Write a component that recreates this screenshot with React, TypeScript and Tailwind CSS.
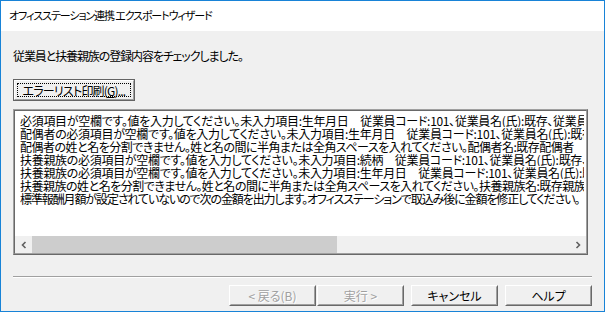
const lines: { text: string; track: string }[] = [
  { text: "必須項目が空欄です。値を入力してください。未入力項目:生年月日　従業員コード:101、従業員名(氏):既存、従業員名(名):既存", track: "tracking-[-0.3px]" },
  { text: "配偶者の必須項目が空欄です。値を入力してください。未入力項目:生年月日　従業員コード:101、従業員名(氏):既存、従業員名(名):既存", track: "tracking-[-0.3px]" },
  { text: "配偶者の姓と名を分割できません。姓と名の間に半角または全角スペースを入れてください。配偶者名:既存配偶者　従業員コード:101", track: "tracking-[-0.5px]" },
  { text: "扶養親族の必須項目が空欄です。値を入力してください。未入力項目:続柄　従業員コード:101、従業員名(氏):既存、従業員名(名):既存", track: "tracking-[-0.3px]" },
  { text: "扶養親族の必須項目が空欄です。値を入力してください。未入力項目:生年月日　従業員コード:101、従業員名(氏):既存、従業員名(名):既存", track: "tracking-[-0.3px]" },
  { text: "扶養親族の姓と名を分割できません。姓と名の間に半角または全角スペースを入れてください。扶養親族名:既存親族　従業員コード:101", track: "tracking-[-0.5px]" },
  { text: "標準報酬月額が設定されていないので次の金額を出力します。オフィスステーションで取込み後に金額を修正してください。", track: "tracking-[-1.1px]" },
];

function WinButton({ label, disabled }: { label: string; disabled?: boolean }) {
  return (
    <div className="w-[87px] h-[21px] border border-t-white border-l-white border-b-[#696969] border-r-[#696969] bg-[#f0f0f0]">
      <div className="w-full h-full border border-t-[#f0f0f0] border-l-[#f0f0f0] border-b-[#a0a0a0] border-r-[#a0a0a0] flex items-center justify-center">
        <span
          className={
            disabled
              ? "whitespace-nowrap text-[#a0a0a0] [text-shadow:1px_1px_0_#ffffff]"
              : "whitespace-nowrap text-black"
          }
        >
          {label}
        </span>
      </div>
    </div>
  );
}

export default function App() {
  return (
    <div
      className="w-[605px] h-[312px] border border-[#1883d7] bg-[#f0f0f0] flex flex-col text-[12px] leading-[13px] text-black overflow-hidden [font-feature-settings:'palt']"
      style={{ fontFamily: '"Noto Sans CJK JP", "Noto Sans", sans-serif' }}
    >
      {/* title bar */}
      <div className="h-[30px] bg-white flex items-center pl-[8px] pb-[2px] shrink-0">
        <span className="whitespace-nowrap text-[11px] tracking-[-1.1px]">オフィスステーション連携 エクスポートウィザード</span>
      </div>

      <div className="flex flex-col px-[12px]">
        <div className="mt-[18px] whitespace-nowrap tracking-[-1.1px]">従業員と扶養親族の登録内容をチェックしました。</div>

        <div className="mt-[17px] w-[122px] h-[22px] border border-[#646464] bg-[#f0f0f0]">
          <div className="w-full h-full border border-t-white border-l-white border-b-[#a0a0a0] border-r-[#a0a0a0] p-[2px]">
            <div className="w-full h-full border border-dotted border-black flex items-center justify-center">
              <span className="whitespace-nowrap tracking-[-0.8px]">
                エラーリスト印刷(<span className="underline">G</span>)...
              </span>
            </div>
          </div>
        </div>

        {/* error list */}
        <div className="mt-[8px] w-[575px] h-[146px] border border-t-[#a0a0a0] border-l-[#a0a0a0] border-b-[#696969] border-r-[#696969]">
          <div className="w-full h-full border border-t-[#696969] border-l-[#696969] border-b-[#a0a0a0] border-r-[#a0a0a0] bg-white flex flex-col">
            <div className="flex-1 overflow-hidden pl-[5px] pt-[3px] pr-[2px]">
              {lines.map((l, i) => (
                <div key={i} className={`whitespace-pre overflow-hidden ${l.track}`}>
                  {l.text}
                </div>
              ))}
            </div>
            <div className="h-[17px] bg-[#f0f0f0] flex items-center shrink-0">
              <div className="w-[17px] h-full flex items-center justify-center">
                <svg width="8" height="8" viewBox="0 0 8 8">
                  <path d="M5.5 1 L2.5 4 L5.5 7" fill="none" stroke="#606060" strokeWidth="1.6" />
                </svg>
              </div>
              <div className="w-[305px] h-full bg-[#cdcdcd]" />
              <div className="flex-1" />
              <div className="w-[17px] h-full flex items-center justify-center">
                <svg width="8" height="8" viewBox="0 0 8 8">
                  <path d="M2.5 1 L5.5 4 L2.5 7" fill="none" stroke="#606060" strokeWidth="1.6" />
                </svg>
              </div>
            </div>
          </div>
        </div>

        {/* separator */}
        <div className="mt-[21px] w-[579px] border-t border-t-[#a0a0a0] border-b border-b-white" />

        <div className="mt-[7px] flex justify-end w-[579px]">
          <div className="flex">
            <WinButton label="< 戻る(B)" disabled />
            <div className="w-[1px]" />
            <WinButton label="実行 >" disabled />
            <div className="w-[7px]" />
            <WinButton label="キャンセル" />
            <div className="w-[7px]" />
            <WinButton label="ヘルプ" />
          </div>
        </div>
      </div>
    </div>
  );
}
